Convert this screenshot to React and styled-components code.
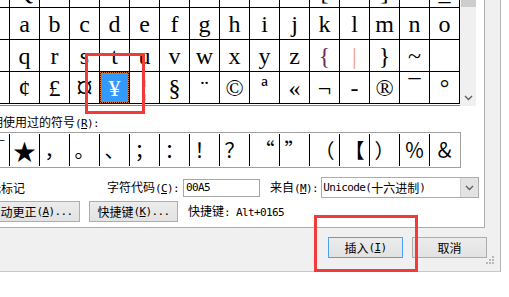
import React from 'react';
import styled, { createGlobalStyle, css } from 'styled-components';

const GlobalStyle = createGlobalStyle`
  html, body { margin: 0; padding: 0; background: #fff; }
  body { width: 509px; height: 297px; overflow: hidden; }
  #root { width: 509px; height: 297px; }
`;

const CJK = `"Noto Sans CJK SC", "Noto Sans", sans-serif`;

const Page = styled.div`
  position: relative;
  width: 509px;
  height: 297px;
  overflow: hidden;
  background: #fff;
  font-family: ${CJK};
  font-size: 12px;
  line-height: 14px;
  color: #000;
`;

const Dialog = styled.div`
  position: relative;
  width: 501px;
  height: 272px;
  box-sizing: border-box;
  background: #f0f0f0;
  border-right: 1px solid #b4b4b4;
  border-bottom: 1px solid #c8c8c8;
  display: flex;
  flex-direction: column;
`;

const TabPage = styled.div`
  flex: none;
  width: 485px;
  height: 228px;
  box-sizing: border-box;
  background: #fff;
  border-right: 1px solid #adadad;
  border-bottom: 1px solid #adadad;
`;

const Content = styled.div`
  margin-left: -21px;
  display: flex;
  flex-direction: column;
  align-items: flex-start;
`;

const ListRow = styled.div`
  margin-top: -25px;
  display: flex;
  align-items: stretch;
`;

const GridFrame = styled.div`
  background: #fff;
  padding-bottom: 1px;
  border-bottom: 1px solid #828282;
`;

const SymbolGrid = styled.div`
  display: grid;
  grid-template-columns: repeat(16, 29px);
  grid-auto-rows: 31px;
  gap: 1px;
  padding: 1px;
  background: #000;
`;

const GridCell = styled.div`
  display: flex;
  align-items: center;
  justify-content: center;
  box-sizing: border-box;
  overflow: hidden;
  background: #fff;
  color: ${p => p.$tint || '#000'};
  font-family: "Liberation Serif", "DejaVu Serif", serif;
  font-size: ${p => p.$size || 24}px;
  line-height: ${p => (p.$size ? '29px' : 1)};
  ${p => p.$selected && css`
    color: #fff;
    border: 1px dotted #e07a1c;
    background: linear-gradient(#3399ff, #3399ff) padding-box, #1a1a1a;
  `}
`;

const Scrollbar = styled.div`
  width: 16px;
  background: #f0f0f0;
  display: flex;
  flex-direction: column;
  justify-content: space-between;
  align-items: center;
`;

const Thumb = styled.div`
  width: 15px;
  height: 32px;
  background: #cdcdcd;
`;

const ArrowBox = styled.div`
  width: 16px;
  height: 16px;
  display: flex;
  align-items: center;
  justify-content: center;
`;

const Lat = styled.span`
  font-family: "DejaVu Sans Mono", "Liberation Mono", monospace;
  font-size: 11px;
  letter-spacing: -0.62px;
`;

const SectionLabel = styled.div`
  margin-top: 9px;
  margin-bottom: 3px;
  height: 14px;
  white-space: nowrap;
`;

const RecentBox = styled.div`
  margin-left: -2px;
  border: 1px solid #a0a0a0;
  padding: 1px;
  display: grid;
  grid-template-columns: repeat(16, 30px);
  grid-auto-rows: 32px;
  background: #fff;
`;

const RecentCell = styled.div`
  box-sizing: border-box;
  border-left: 1px solid #000;
  display: flex;
  align-items: center;
  justify-content: center;
  font-family: ${CJK};
  font-size: ${p => p.$size || 20}px;
  line-height: 1;
  font-feature-settings: "fwid";
  overflow: hidden;
`;

const CodeRow = styled.div`
  margin-top: 9px;
  height: 21px;
  display: flex;
  align-items: center;
  white-space: nowrap;
`;

const Text = styled.span`
  flex: none;
  margin-left: ${p => p.$ml || 0}px;
  width: ${p => (p.$w ? `${p.$w}px` : 'auto')};
  white-space: nowrap;
`;

const Input = styled.div`
  flex: none;
  margin-left: ${p => p.$ml || 0}px;
  width: ${p => p.$w}px;
  height: 18px;
  box-sizing: border-box;
  border: 1px solid #a7a7a7;
  background: #fff;
  padding-left: 2px;
  display: flex;
  align-items: center;
`;

const Combo = styled.div`
  flex: none;
  margin-left: ${p => p.$ml || 0}px;
  width: ${p => p.$w}px;
  height: 21px;
  box-sizing: border-box;
  border: 1px solid #acacac;
  background: #fff;
  display: flex;
  align-items: stretch;
`;

const ComboText = styled.div`
  flex: 1;
  padding-left: 1px;
  display: flex;
  align-items: center;
`;

const ComboButton = styled.div`
  width: 17px;
  background: #e3e3e3;
  border-left: 1px solid #cfcfcf;
  display: flex;
  align-items: center;
  justify-content: center;
`;

const ButtonRow = styled.div`
  margin-top: 3px;
  height: 21px;
  display: flex;
  align-items: center;
`;

const Button = styled.div`
  flex: none;
  margin-left: ${p => p.$ml || 0}px;
  width: ${p => p.$w}px;
  height: 21px;
  box-sizing: border-box;
  border: 1px solid ${p => (p.$default ? '#4aa3ef' : '#adadad')};
  background: linear-gradient(#ececec, #e2e2e2);
  display: flex;
  align-items: center;
  justify-content: center;
  white-space: nowrap;
`;

const BottomBar = styled.div`
  flex: 1;
  display: flex;
  justify-content: flex-end;
  align-items: flex-start;
  gap: 9px;
  padding: 9px 13px 0 0;
`;

const Grip = styled.svg`
  position: absolute;
  right: 6px;
  bottom: 7px;
`;

const Annotation = styled.div`
  position: absolute;
  box-sizing: border-box;
  border: 3px solid #f23a3a;
  pointer-events: none;
`;

const rows = [
  ['P', 'Q', 'R', 'S', 'T', 'U', 'V', 'W', 'X', 'Y', 'Z', '[', '\\', ']', '^', '_'],
  ['`', 'a', 'b', 'c', 'd', 'e', 'f', 'g', 'h', 'i', 'j', 'k', 'l', 'm', 'n', 'o'],
  ['p', 'q', 'r', 's', 't', 'u', 'v', 'w', 'x', 'y', 'z', '{', '|', '}', '~', ''],
  ['¡', '¢', '£', '¤', '¥', '¦', '§', '¨', '©', 'ª', '«', '¬', '-', '®', '¯', '°'],
];

const tints = { '{': '#6b2d55', '|': '#f0a07c' };
const sizes = { '¤': 34 };

const recent = ['√', '★', '，', '。', '、', '；', '：', '！', '？', '“', '”', '（', '【', '）', '％', '＆'];

const Chevron = () => (
  <svg width="9" height="6" viewBox="0 0 9 6">
    <path d="M1 1 L4.5 4.5 L8 1" fill="none" stroke="#606060" strokeWidth="1.4" />
  </svg>
);

export default function App() {
  return (
    <Page>
      <GlobalStyle />
      <Dialog>
        <TabPage>
          <Content>
            <ListRow>
              <GridFrame>
                <SymbolGrid>
                  {rows.map((r, ri) =>
                    r.map((ch, ci) => (
                      <GridCell
                        key={`${ri}-${ci}`}
                        $selected={ri === 3 && ci === 4}
                        $tint={tints[ch]}
                        $size={sizes[ch]}
                      >
                        {ch}
                      </GridCell>
                    ))
                  )}
                </SymbolGrid>
              </GridFrame>
              <Scrollbar>
                <Thumb />
                <ArrowBox>
                  <Chevron />
                </ArrowBox>
              </Scrollbar>
            </ListRow>

            <SectionLabel>
              近期使用过的符号<Lat>(<u>R</u>):</Lat>
            </SectionLabel>

            <RecentBox>
              {recent.map((ch, i) => (
                <RecentCell key={i} $size={ch === '★' ? 23 : 20}>
                  {ch}
                </RecentCell>
              ))}
            </RecentBox>

            <CodeRow>
              <Text $ml={-2} $w={130}>日元标记</Text>
              <Text>
                字符代码<Lat>(<u>C</u>):</Lat>
              </Text>
              <Input $ml={4} $w={77}>
                <Lat>00A5</Lat>
              </Input>
              <Text $ml={10}>
                来自<Lat>(<u>M</u>):</Lat>
              </Text>
              <Combo $ml={3} $w={158}>
                <ComboText>
                  <Lat>Unicode(</Lat>十六进制<Lat>)</Lat>
                </ComboText>
                <ComboButton>
                  <Chevron />
                </ComboButton>
              </Combo>
            </CodeRow>

            <ButtonRow>
              <Button $ml={2} $w={99}>
                自动更正<Lat>(<u>A</u>)...</Lat>
              </Button>
              <Button $ml={9} $w={89}>
                快捷键<Lat>(<u>K</u>)...</Lat>
              </Button>
              <Text $ml={10}>
                快捷键<Lat>: Alt+0165</Lat>
              </Text>
            </ButtonRow>
          </Content>
        </TabPage>

        <BottomBar>
          <Button $w={75} $default>
            插入<Lat>(<u>I</u>)</Lat>
          </Button>
          <Button $w={75}>取消</Button>
        </BottomBar>

        <Grip width="9" height="9" viewBox="0 0 9 9">
          <g fill="#b8b8b8">
            <rect x="7" y="1" width="2" height="2" />
            <rect x="4" y="4" width="2" height="2" />
            <rect x="7" y="4" width="2" height="2" />
            <rect x="1" y="7" width="2" height="2" />
            <rect x="4" y="7" width="2" height="2" />
            <rect x="7" y="7" width="2" height="2" />
          </g>
        </Grip>
      </Dialog>

      <Annotation style={{ left: 85, top: 53, width: 60, height: 61 }} />
      <Annotation style={{ left: 314, top: 215, width: 104, height: 57 }} />
    </Page>
  );
}
